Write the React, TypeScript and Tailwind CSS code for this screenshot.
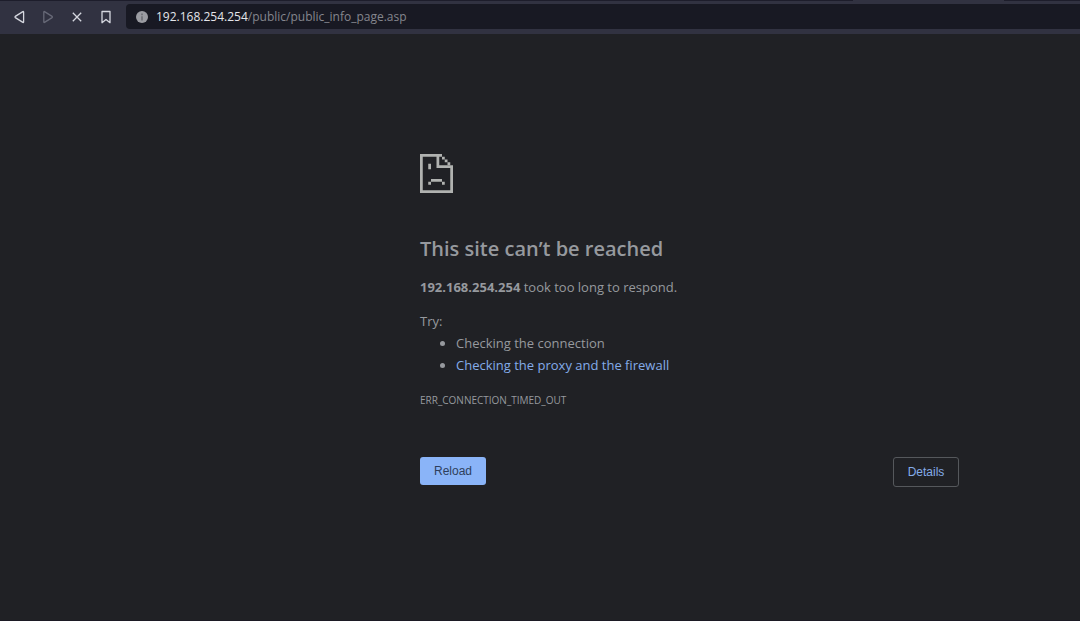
import React from 'react';

interface NavButtonProps {
  label: string;
  muted?: boolean;
  children: React.ReactNode;
}

const NavButton: React.FC<NavButtonProps> = ({ label, muted, children }) => (
  <button
    type="button"
    aria-label={label}
    className={`flex h-[25px] w-[29px] items-center justify-center ${muted ? 'text-[#676977]' : 'text-[#d5d7df]'}`}
  >
    <svg
      viewBox="0 0 16 16"
      className="h-4 w-4"
      fill="none"
      stroke="currentColor"
      strokeWidth="1.3"
      strokeLinejoin="round"
    >
      {children}
    </svg>
  </button>
);

const Toolbar: React.FC = () => (
  <header className="bg-[#313241]">
    {/* Bottom edge of the tab strip, open under the active tab */}
    <div className="flex h-px">
      <div className="w-[79%] bg-[#1d1d2b]" />
      <div className="w-[14%]" />
      <div className="flex-1 bg-[#1d1d2b]" />
    </div>

    <div className="flex h-[33px] items-center pb-[2px] pl-1">
      <nav className="flex shrink-0">
        <NavButton label="Back">
          <path d="M12.6 3v10q0 .7-.7.4L4.3 8.6q-.7-.6 0-1.2l7.6-4.8q.7-.3.7.4Z" />
        </NavButton>
        <NavButton label="Forward" muted>
          <path d="M3.8 3v10q0 .7.7.4l7.6-4.8q.7-.6 0-1.2L4.5 2.6q-.7-.3-.7.4Z" />
        </NavButton>
        <NavButton label="Stop">
          <path d="M3.8 3.8l8.4 8.4M12.2 3.8l-8.4 8.4" />
        </NavButton>
        <NavButton label="Bookmark">
          <path d="M4 2.5h8v11.2L8 10.4l-4 3.3Z" />
        </NavButton>
      </nav>

      {/* Address bar */}
      <div className="ml-[6px] flex h-[25px] flex-1 items-center gap-2 rounded-l bg-[#181923] pl-[10px]">
        <svg viewBox="0 0 12 12" className="h-3 w-3 shrink-0">
          <circle cx="6" cy="6" r="6" fill="#9b9ca2" />
          <path d="M6 2.6v1.6M6 5.2v4.2" stroke="#696a72" strokeWidth="1.5" />
        </svg>
        <span className="text-[12px] whitespace-nowrap text-[#85868e]">
          <span className="text-[#e4e5ea]">192.168.254.254</span>/public/public_info_page.asp
        </span>
      </div>
    </div>
  </header>
);

const SadPageIcon: React.FC = () => (
  <svg viewBox="0 0 12 14" className="h-[39px] w-[33px]" fill="#b0b2b0" preserveAspectRatio="none">
    {/* Sheet outline */}
    <path d="M0 0h8v1H7v3h5v10H0ZM1 1v12h10V5H6V1Z" fillRule="evenodd" />
    {/* Folded corner */}
    <path d="M8 1h1v1H8ZM9 2h1v1H9ZM10 3h1v1h-1Z" />
    {/* Face */}
    <path d="M3 3.5h1v2H3ZM4 9h4v1H4ZM3 10h1v1H3ZM8 10h1v1H8Z" />
  </svg>
);

const ErrorPage: React.FC = () => (
  <main className="ml-[420px] max-w-[540px] flex-1 pt-[120px] text-[13px] text-[#96999e]">
    <SadPageIcon />
    <h1 className="mt-[41px] text-[20px] leading-[30px] font-semibold">This site can’t be reached</h1>
    <p className="mt-3 leading-[22px]">
      <strong className="font-bold">192.168.254.254</strong> took too long to respond.
    </p>
    <p className="mt-3 leading-[22px]">Try:</p>
    <ul className="list-disc pl-9 leading-[22px]">
      <li>Checking the connection</li>
      <li>
        <a href="#buttons" className="text-[#84ace9]">
          Checking the proxy and the firewall
        </a>
      </li>
    </ul>
    <p className="mt-[13px] text-[10px] leading-[22px]">ERR_CONNECTION_TIMED_OUT</p>

    <div
      id="buttons"
      className="mt-[46px] flex items-start justify-between pr-px font-['Liberation_Sans',Arial,sans-serif] text-[12px]"
    >
      <button type="button" className="h-7 w-[66px] rounded-[3px] bg-[#8ab4f8] text-[#2e3f5c]">
        Reload
      </button>
      <button type="button" className="h-[30px] w-[66px] rounded-[3px] border border-[#55585c] text-[#84ace9]">
        Details
      </button>
    </div>
  </main>
);

export default function App() {
  return (
    <div className="flex min-h-screen flex-col border-b border-[#1c1a24] bg-[#202125] font-['Open_Sans','Noto_Sans',sans-serif]">
      <Toolbar />
      <ErrorPage />
    </div>
  );
}
